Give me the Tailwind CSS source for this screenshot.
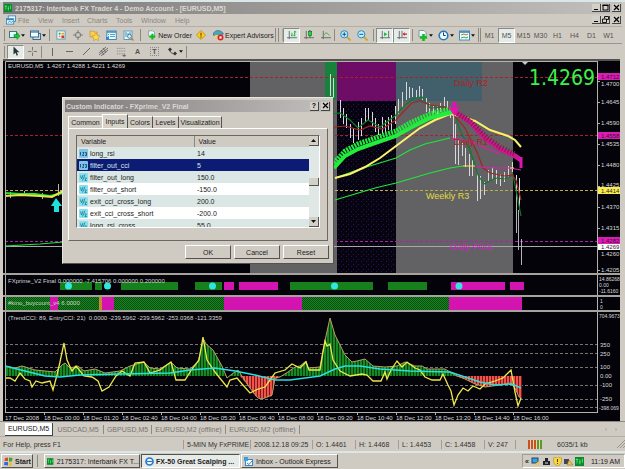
<!DOCTYPE html>
<html lang="en">
<head>
  <meta charset="UTF-8">
  <meta name="viewport" content="width=device-width, initial-scale=1.0">
  <title>Interbank FX Trader 4</title>
  <script src="https://cdn.jsdelivr.net/npm/@tailwindcss/browser@4"></script>
</head>
<body class="bg-[#d0cbc2] min-h-screen font-['Liberation_Sans',Arial,sans-serif] text-[7px] leading-[9px] text-[#222]">

  <!-- Icon set -->
  <svg class="hidden">
    <defs>
      <symbol id="caret" viewBox="0 0 5 3"><path d="M0 0h5L2.500 3z" fill="#111"/></symbol>
      <symbol id="newchart" viewBox="0 0 11 11"><rect x=".5" y="1.500" width="7" height="6" fill="#dff" stroke="#477"/><path d="M5 4.500h3v-2l3 3.500-3 3.500v-2H5z" fill="#1c2" stroke="#174" stroke-width=".5"/></symbol>
      <symbol id="profiles" viewBox="0 0 11 11"><rect x="3" y="3.500" width="7.500" height="6" fill="#cde" stroke="#468"/><rect x=".5" y="1" width="8" height="6" fill="#eff" stroke="#468"/><path d="M1 2h7" stroke="#49c" stroke-width="1.500"/></symbol>
      <symbol id="market" viewBox="0 0 11 11"><rect x="1" y="1" width="9" height="9" fill="#eff" stroke="#59b"/><path d="M3 3h2v2H3z" fill="#2a3"/><path d="M6 3h3v2H6zM3 6h2v2H3z" fill="#e93"/><path d="M6 6h3v3H6z" fill="#c33"/></symbol>
      <symbol id="target" viewBox="0 0 11 11"><circle cx="5.500" cy="5.500" r="3" fill="none" stroke="#777"/><path d="M5.500 0v4M5.500 7v4M0 5.500h4M7 5.500h4" stroke="#777"/></symbol>
      <symbol id="folder" viewBox="0 0 11 11"><path d="M1 1h3l1 1h3v5H1z" fill="#fc5" stroke="#b82" stroke-width=".6"/><path d="M7 3l1.200 2.500 2.800.3-2 2 .5 2.800L7 9.300 4.500 10.600 5 7.800l-2-2 2.800-.3z" fill="#fd4" stroke="#b82" stroke-width=".5"/></symbol>
      <symbol id="terminal" viewBox="0 0 11 11"><rect x=".8" y="1" width="9.500" height="8.500" fill="#dff" stroke="#48b"/><path d="M1 2h9" stroke="#48b" stroke-width="1.500"/><path d="M2 4.500h1M4 4.500h5M2 6.500h1M4 6.500h5" stroke="#69b"/><path d="M0 7h3v3H0z" fill="#38c"/></symbol>
      <symbol id="tester" viewBox="0 0 11 11"><rect x="1" y="1" width="8" height="8.500" fill="#dff" stroke="#69b"/><path d="M3 2v5M5 3v2M7 2v3" stroke="#48a"/><circle cx="6.500" cy="6.300" r="2" fill="#cef" stroke="#468" stroke-width=".8"/><path d="M8 8l2.500 2.500" stroke="#b83" stroke-width="1.500"/></symbol>
      <symbol id="order" viewBox="0 0 11 11"><path d="M2 .5h5l2 2V7H2z" fill="#eff" stroke="#688" stroke-width=".8"/><path d="M6.500 4v7M3 7.500h7" stroke="#1b2" stroke-width="2.600"/></symbol>
      <symbol id="diamond" viewBox="0 0 11 11"><path d="M5.500.5l5 5-5 5-5-5z" fill="#fc2" stroke="#a80" stroke-width=".8"/><path d="M5.500 3v3.200M5.500 7.200v1.200" stroke="#740" stroke-width="1.300"/></symbol>
      <symbol id="expert" viewBox="0 0 11 11"><path d="M0 5c0-3 3-4.500 5-4.500S10 2 10.500 4L5 6z" fill="#4ab" stroke="#258" stroke-width=".5"/><path d="M2 5h6v2c0 3-5 3-6 0z" fill="#fc5"/><circle cx="7.500" cy="7.500" r="3" fill="#d22"/><path d="M6.400 6.400h2.200v2.200H6.400z" fill="#fff"/></symbol>
      <symbol id="bars" viewBox="0 0 11 11"><path d="M2.500 1v9M0 8.500h11" stroke="#666"/><path d="M5.500 3v4M4.500 6h1M8.500 1v6M8.500 2H10M7 6h1.500" stroke="#1a3"/></symbol>
      <symbol id="candles" viewBox="0 0 11 11"><path d="M2.500 1v9M0 8.500h11" stroke="#666"/><path d="M6.500 0v8" stroke="#151"/><rect x="5" y="1.500" width="3.500" height="4.500" fill="#1d3" stroke="#162" stroke-width=".6"/></symbol>
      <symbol id="line" viewBox="0 0 11 11"><path d="M2.500 1v9M0 8.500h11" stroke="#666"/><path d="M3 6c2-4 4-3 6 0" fill="none" stroke="#2a4"/></symbol>
      <symbol id="zoomin" viewBox="0 0 11 11"><path d="M6.500 6.500l4 4" stroke="#ca3" stroke-width="2"/><circle cx="4.300" cy="4.300" r="3.600" fill="#bef" stroke="#38b"/><path d="M2.300 4.300h4M4.300 2.300v4" stroke="#258"/></symbol>
      <symbol id="zoomout" viewBox="0 0 11 11"><path d="M6.500 6.500l4 4" stroke="#ca3" stroke-width="2"/><circle cx="4.300" cy="4.300" r="3.600" fill="#bef" stroke="#38b"/><path d="M2.300 4.300h4" stroke="#258"/></symbol>
      <symbol id="scroll" viewBox="0 0 11 11"><path d="M2.500 1v9M0 8.500h11M9.500 1v7" stroke="#666"/><path d="M4.500 2.500v4.500l3.500-2.200z" fill="#1b3"/></symbol>
      <symbol id="shift" viewBox="0 0 11 11"><path d="M2.500 1v9M0 8.500h11M5.500 1v7" stroke="#666"/><path d="M6 4.500l2.500-2v1.300H11v1.400H8.500v1.300z" fill="#d22"/></symbol>
      <symbol id="clock" viewBox="0 0 11 11"><circle cx="5.500" cy="5.500" r="4.300" fill="#eff" stroke="#27b" stroke-width="1.600"/><path d="M5.500 2.500v3h2.200" fill="none" stroke="#236"/></symbol>
      <symbol id="template" viewBox="0 0 11 11"><rect x=".5" y="1" width="10" height="9" fill="#eff" stroke="#48b"/><path d="M1 2h9" stroke="#38b" stroke-width="1.600"/><path d="M2 5l3-1 2 1 2-1" fill="none" stroke="#c63"/><path d="M2 8l3-1 2 1 2-1" fill="none" stroke="#2a4"/></symbol>
      <symbol id="cursor" viewBox="0 0 11 11"><path d="M3.500.5v8l2-1.800 1.200 3 1.300-.6L6.800 6.200h2.600z" fill="#333"/></symbol>
      <symbol id="cross" viewBox="0 0 11 11"><path d="M5.500 1v3.500M5.500 6.500V10M1 5.500h3.500M6.500 5.500H10" stroke="#777"/></symbol>
      <symbol id="channel" viewBox="0 0 11 11"><path d="M1 7l7-6M3 10l7-6M1 9l9-7M3 4l3 5M5 2l3 5" stroke="#666" stroke-width=".9"/></symbol>
      <symbol id="fibo" viewBox="0 0 11 11"><path d="M1 1.500h9M1 4.500h9M1 7.500h9" stroke="#777" stroke-dasharray="1 1"/><path d="M7 9.500h4M9 8v3" stroke="#666"/></symbol>
      <symbol id="arrows" viewBox="0 0 11 11"><path d="M1 3.500l2-2 2 2-2 2zM6 7.500l2-2 2 2-2 2z" fill="#333"/><path d="M3 4c0 3 2 3 4 4" fill="none" stroke="#444"/></symbol>
      <symbol id="chartwin" viewBox="0 0 11 11"><rect x="2.500" y="1" width="8" height="6" fill="#eff" stroke="#48b"/><rect x=".5" y="4" width="8" height="6" fill="#eff" stroke="#48b"/><path d="M1 5h7" stroke="#38b" stroke-width="1.500"/><path d="M2 8.500l2-1.500 2 1 2-1" stroke="#48a" fill="none"/></symbol>
      <symbol id="app" viewBox="0 0 11 11"><rect width="11" height="11" fill="#0a8a2c"/><path d="M1 3h3M2.500 2v6M5 6h2M6 3v6M9 2v5" stroke="#6f8" stroke-width=".9"/></symbol>
      <symbol id="min" viewBox="0 0 7 7"><path d="M1 5.500h4" stroke="#000"/></symbol>
      <symbol id="max" viewBox="0 0 7 7"><rect x="1" y="1" width="5" height="5" fill="none" stroke="#000"/><path d="M.5 1.500h6" stroke="#000"/></symbol>
      <symbol id="restore" viewBox="0 0 7 7"><path d="M2.500 2.500v-2h4v3h-2M.5 3h4v3.500h-4z" fill="none" stroke="#000" stroke-width=".9"/></symbol>
      <symbol id="close" viewBox="0 0 7 7"><path d="M1 1l5 5M6 1L1 6" stroke="#000" stroke-width="1.200"/></symbol>
      <symbol id="varnum" viewBox="0 0 9 9"><rect width="9" height="9" rx="1" fill="#7fc4e6"/><path d="M1.500 3v3.500M3.500 3.500h1.500L3.500 6.500H5M6 3.500h1.500v3H6M6.500 5h1" fill="none" stroke="#14507c" stroke-width=".9"/></symbol>
      <symbol id="varfrac" viewBox="0 0 9 9"><rect width="9" height="9" rx="1" fill="#86e0ee"/><path d="M1.500 2.500l1 3.500 1.500-4M3.500 7.500L6 1.500M5.500 5h2L5.800 7.500h2" fill="none" stroke="#167a98" stroke-width=".8"/></symbol>
    </defs>
  </svg>

  <div class="relative flex flex-col border-t-2 border-[#dbe7e6]">

    <!-- Title bar -->
    <header class="flex items-center h-3 mx-[3px] px-px bg-linear-to-r from-[#7c7a7a] to-[#c2c0be]">
      <svg class="w-2 h-2 mr-[3px]"><use href="#app"/></svg>
      <h1 class="flex-1 font-bold text-[#dcd8d0] whitespace-nowrap">2175317: Interbank FX Trader 4 - Demo Account - [EURUSD,M5]</h1>
      <button aria-label="Minimize" class="flex items-center justify-center w-[9px] h-2 bg-[#d4d0c8] border-r border-b border-[#444]"><svg class="w-[7px] h-[7px]"><use href="#min"/></svg></button>
      <button aria-label="Maximize" class="flex items-center justify-center w-[9px] h-2 bg-[#d4d0c8] border-r border-b border-[#444]"><svg class="w-[7px] h-[7px]"><use href="#max"/></svg></button>
      <button aria-label="Close" class="ml-0.5 flex items-center justify-center w-[9px] h-2 bg-[#d4d0c8] border-r border-b border-[#444]"><svg class="w-[7px] h-[7px]"><use href="#close"/></svg></button>
    </header>

    <!-- Menu -->
    <nav class="flex items-center h-3 mx-[3px] px-px text-[#8a8781]">
      <svg class="w-[10px] h-[10px] mx-0.5"><use href="#chartwin"/></svg>
      <a href="#" class="w-5">File</a>
      <a href="#" class="w-6">View</a>
      <a href="#" class="w-[25px]">Insert</a>
      <a href="#" class="w-[29px]">Charts</a>
      <a href="#" class="w-[25px]">Tools</a>
      <a href="#" class="w-[34px]">Window</a>
      <a href="#" class="flex-1">Help</a>
      <button aria-label="Minimize chart" class="flex items-center justify-center w-[9px] h-2 bg-[#d4d0c8] border-r border-b border-[#444]"><svg class="w-[7px] h-[7px]"><use href="#min"/></svg></button>
      <button aria-label="Restore chart" class="flex items-center justify-center w-[9px] h-2 bg-[#d4d0c8] border-r border-b border-[#444]"><svg class="w-[7px] h-[7px]"><use href="#restore"/></svg></button>
      <button aria-label="Close chart" class="ml-0.5 flex items-center justify-center w-[9px] h-2 bg-[#d4d0c8] border-r border-b border-[#444]"><svg class="w-[7px] h-[7px]"><use href="#close"/></svg></button>
    </nav>

    <!-- Standard toolbar -->
    <div class="flex items-center h-[17px] mx-[3px] border-t border-[#b3afa8] whitespace-nowrap">
      <span class="w-0.5 h-3 ml-px mr-px border-l border-[#8c8882]"></span>
      <button aria-label="New chart" class="flex items-center gap-px w-[21px] pl-0.5"><svg class="w-[11px] h-[11px]"><use href="#newchart"/></svg><svg class="w-1 h-[3px]"><use href="#caret"/></svg></button>
      <button aria-label="Profiles" class="flex items-center gap-px w-[21px] pl-0.5"><svg class="w-[11px] h-[11px]"><use href="#profiles"/></svg><svg class="w-1 h-[3px]"><use href="#caret"/></svg></button>
      <span class="w-[3px] h-3 border-l border-[#8c8882]"></span>
      <button aria-label="Market watch" class="flex justify-center w-[17px]"><svg class="w-[10px] h-[10px]"><use href="#market"/></svg></button>
      <button aria-label="Data window" class="flex justify-center w-[17px]"><svg class="w-[10px] h-[10px]"><use href="#target"/></svg></button>
      <button aria-label="Navigator" class="flex justify-center w-[17px]"><svg class="w-[11px] h-[11px]"><use href="#folder"/></svg></button>
      <button aria-label="Terminal" class="flex justify-center w-[17px]"><svg class="w-[11px] h-[11px]"><use href="#terminal"/></svg></button>
      <button aria-label="Strategy tester" class="flex justify-center w-[17px]"><svg class="w-[11px] h-[11px]"><use href="#tester"/></svg></button>
      <span class="w-1 h-3 ml-[3px] border-l border-[#8c8882]"></span>
      <button class="flex items-center w-12 pl-[3px] gap-0.5"><svg class="w-[10px] h-[10px]"><use href="#order"/></svg>New Order</button>
      <button aria-label="MetaEditor" class="flex justify-center w-[17px]"><svg class="w-[10px] h-[10px]"><use href="#diamond"/></svg></button>
      <button class="flex items-center w-[66px] pl-1 gap-px"><svg class="w-[11px] h-[11px] shrink-0"><use href="#expert"/></svg>Expert Advisors</button>
      <span class="w-1 h-[14px] border-x border-[#8c8882]"></span>
      <span class="w-1 h-3 border-r border-[#aaa6a0]"></span>
      <button aria-label="Bar chart" class="flex items-center justify-center w-[17px] h-[15px] bg-[#e3ece9] border border-t-[#8c8882] border-l-[#8c8882] border-white"><svg class="w-[10px] h-[10px]"><use href="#bars"/></svg></button>
      <button aria-label="Candlesticks" class="flex justify-center w-[17px]"><svg class="w-[10px] h-[10px]"><use href="#candles"/></svg></button>
      <button aria-label="Line chart" class="flex justify-center w-[17px]"><svg class="w-[10px] h-[10px]"><use href="#line"/></svg></button>
      <span class="w-[3px] h-3 border-l border-[#8c8882]"></span>
      <button aria-label="Zoom in" class="flex justify-center w-[17px]"><svg class="w-[11px] h-[11px]"><use href="#zoomin"/></svg></button>
      <button aria-label="Zoom out" class="flex justify-center w-[17px]"><svg class="w-[11px] h-[11px]"><use href="#zoomout"/></svg></button>
      <span class="w-[3px] h-3 ml-0.5 border-l border-[#8c8882]"></span>
      <button aria-label="Auto scroll" class="flex items-center justify-center w-[17px] h-[15px] bg-[#e3ece9] border border-t-[#8c8882] border-l-[#8c8882] border-white"><svg class="w-[10px] h-[10px]"><use href="#scroll"/></svg></button>
      <button aria-label="Chart shift" class="flex items-center justify-center w-[17px] h-[15px] bg-[#e3ece9] border border-t-[#8c8882] border-l-[#8c8882] border-white"><svg class="w-[10px] h-[10px]"><use href="#shift"/></svg></button>
      <span class="w-[3px] h-3 ml-0.5 border-l border-[#8c8882]"></span>
      <button aria-label="Indicators" class="flex items-center gap-px w-[21px] pl-0.5"><svg class="w-[11px] h-[11px]"><use href="#order"/></svg><svg class="w-1 h-[3px]"><use href="#caret"/></svg></button>
      <button aria-label="Periods" class="flex items-center gap-px w-[21px] pl-0.5"><svg class="w-[11px] h-[11px]"><use href="#clock"/></svg><svg class="w-1 h-[3px]"><use href="#caret"/></svg></button>
      <button aria-label="Templates" class="flex items-center gap-px w-[21px] pl-0.5"><svg class="w-[11px] h-[11px]"><use href="#template"/></svg><svg class="w-1 h-[3px]"><use href="#caret"/></svg></button>
      <span class="w-[3px] h-[14px] border-x border-[#8c8882]"></span>
      <div class="flex text-[#55524e]">
        <button class="w-[17px]">M1</button>
        <button class="w-[17px] h-[15px] bg-[#e3ece9] border border-t-[#8c8882] border-l-[#8c8882] border-white">M5</button>
        <button class="w-[17px]">M15</button>
        <button class="w-[17px]">M30</button>
        <button class="w-[17px]">H1</button>
        <button class="w-[17px]">H4</button>
        <button class="w-[17px]">D1</button>
        <button class="w-[17px]">W1</button>
      </div>
    </div>

    <!-- Drawing tools -->
    <div class="flex items-center h-4 mx-[3px] border-t border-[#99958f] text-[#55524e]">
      <span class="w-0.5 h-3 ml-px mr-px border-l border-[#8c8882]"></span>
      <button aria-label="Cursor" class="flex items-center justify-center w-[17px] h-[14px] bg-[#e3ece9] border border-t-[#8c8882] border-l-[#8c8882] border-white"><svg class="w-[11px] h-[11px]"><use href="#cursor"/></svg></button>
      <button aria-label="Crosshair" class="flex justify-center w-[17px]"><svg class="w-[11px] h-[11px]"><use href="#cross"/></svg></button>
      <span class="w-[3px] h-3 border-l border-[#8c8882]"></span>
      <button aria-label="Vertical line" class="flex justify-center w-[17px]"><span class="w-px h-2 bg-[#666]"></span></button>
      <button aria-label="Horizontal line" class="flex justify-center w-[17px]"><span class="w-[7px] h-px bg-[#666]"></span></button>
      <button aria-label="Trendline" class="flex justify-center w-[17px]"><svg class="w-[9px] h-[9px]" viewBox="0 0 9 9"><path d="M1 8l7-7" stroke="#666"/></svg></button>
      <button aria-label="Channel" class="flex justify-center w-[17px]"><svg class="w-[11px] h-[11px]"><use href="#channel"/></svg></button>
      <button aria-label="Fibonacci" class="flex justify-center w-[17px]"><svg class="w-[10px] h-[10px]"><use href="#fibo"/></svg></button>
      <button class="w-[17px] font-bold">A</button>
      <button class="w-[17px] font-bold"><span class="border border-dotted border-[#888] px-px">T</span></button>
      <button aria-label="Arrows" class="flex items-center gap-px w-[23px] pl-1"><svg class="w-[11px] h-[11px]"><use href="#arrows"/></svg><svg class="w-1 h-[3px]"><use href="#caret"/></svg></button>
      <span class="w-[3px] h-3 border-l border-[#8c8882]"></span>
    </div>

    <!-- Charts -->
    <main class="ml-[3px] mr-[5px] border-t-2 border-[#55534f] bg-[#04030a]">
      <svg class="block w-full" viewBox="3 61 617 360" font-family="'Liberation Sans',Arial,sans-serif" font-size="6" fill="none">
        <defs>
          <pattern id="pBar" width="2" height="2" patternUnits="userSpaceOnUse"><rect width="2" height="2" fill="#5c0a8c"/><path d="M0 0h1v1H0zM1 1h1v1H1z" fill="#800e40"/></pattern>
          <pattern id="pDots" width="5" height="5" patternUnits="userSpaceOnUse"><rect width="5" height="5" fill="#06040e"/><path d="M1 1h1v1H1zM3 4h1v1H3z" fill="#2c105c"/></pattern>
          <pattern id="pGreen" width="2" height="2" patternUnits="userSpaceOnUse"><rect width="2" height="2" fill="#17881c"/><path d="M0 0h1v1H0zM1 1h1v1H1z" fill="#0a4a14"/></pattern>
          <pattern id="pUp" width="3" height="4" patternUnits="userSpaceOnUse"><rect width="3" height="4" fill="#0b3a10"/><rect width="2" height="4" fill="#168a22"/></pattern>
          <pattern id="pDown" width="3" height="4" patternUnits="userSpaceOnUse"><rect width="3" height="4" fill="#701c1c"/><rect width="2" height="4" fill="#f4504c"/></pattern>
          <clipPath id="above"><rect x="4" y="312" width="594" height="64"/></clipPath>
          <clipPath id="below"><rect x="4" y="376" width="594" height="36"/></clipPath>
        </defs>

        <!-- session blocks -->
        <rect x="250" y="62" width="87" height="211" fill="#626164"/>
        <rect x="325" y="62" width="12" height="38" fill="#17823c"/>
        <rect x="337" y="62" width="59" height="211" fill="url(#pDots)"/>
        <rect x="337" y="62" width="59" height="39" fill="url(#pBar)"/>
        <rect x="396" y="62" width="117" height="211" fill="#626164"/>
        <rect x="396" y="62" width="86" height="39" fill="#41606c"/>

        <!-- levels -->
        <g stroke-dasharray="3 2">
          <path d="M5 77.500H597M5 135.500H597" stroke="#a8202a"/>
          <path d="M5 190.500H597" stroke="#b8b040"/>
          <path d="M5 241.500H597" stroke="#b020b0"/>
        </g>
        <path d="M5 246.500H597" stroke="#a9a9a9"/>

        <!-- price bars -->
        <path stroke="#d8d8dc" d="M330.500 74V96M333.500 78V99M340.500 100V118M343.500 108V124M346.500 114V128M350.500 124V138M353.500 128V143M358.500 122V140M361.500 118V136M365.500 108V122M368.500 108V120M372.500 112V126M375.500 118V132M378.500 124V135M382.500 117V134M385.500 120V132M388.500 117V130M391.500 115V130M395.500 106V124M398.500 99V114M402.500 92V108M406.500 82V100M409.500 87V98M412.500 88V97M416.500 90V98M419.500 86V97M422.500 89V100M426.500 98V112M429.500 103V114M433.500 106V114M437.500 106V115M440.500 103V112M444.500 97V110M447.500 101V112M450.500 107V118M453.500 116V138M455.500 124V164M458.500 140V165M462.500 143V156M465.500 148V167M469.500 154V176M472.500 160V176M477.500 172V201M480.500 176V199M484.500 182V195M488.500 170V182M492.500 167V180M496.500 170V184M500.500 174V186M504.500 172V182M508.500 166V178M512.500 162V172M516.500 175V190M519.500 178V210"/>
        <path stroke="#b4b4b8" d="M516.500 190V233M518.500 210V250M521.500 239V265M10.500 192V198M24.500 191V196M42.500 193V199M58.500 184V196"/>

        <!-- averages -->
        <g stroke-width="1.200">
          <path d="M325 115L340 113 350 120 358 128 368 120 380 127 395 116 405 105 415 98 422 97 430 108 445 107 455 115 460 130 470 150 478 175 484 184 495 178 505 179 513 175 517 195 521 216" stroke="#117a2c"/>
          <path d="M325 140L335 127 345 126 360 130 370 126 382 129 396 120 404 111 412 103 420 101 430 105 445 107 450 110 465 128 477 152 483 168 490 173 505 176 512 175 516 180 521 200" stroke="#a02824"/>
          <path d="M335 178L360 169 396 158 410 150 425 144 450 138M335 200L375 188 396 183 430 173 450 168 463 166M5 246L40 244 63 242" stroke="#1fe83a"/>
          <path d="M450 138L470 141 485 148 500 154M475 167L500 168 510 168 521 170" stroke="#e01cae"/>
          <path d="M463 166H475M510 168H514" stroke="#f5ee40"/>
        </g>
        <path d="M335 178L350 174 365 167 380 158 400 143 420 128 435 120 450 114 460 116 475 121 490 130 508 136 515 140 521 147" stroke="#fbf36a" stroke-width="2"/>
        <path d="M334 168L345 156 358 149 375 143 396 136 410 128 430 118 452 112" stroke="#22ec3c" stroke-width="4"/>
        <path d="M334 163L345 151 358 144 375 138 396 131 410 123 430 114 452 109" stroke="#22ec3c" stroke-width="5" stroke-dasharray="2 1"/>
        <path d="M455 112L470 122 485 138 500 149 515 156 521 160" stroke="#c81892" stroke-width="5"/>
        <path d="M521 157V168" stroke="#d817b4" stroke-width="3"/>
        <path d="M455 112L470 121 485 136 500 147 515 154" stroke="#8a1838" stroke-width="5" stroke-dasharray="1 2"/>
        <path d="M5 193L20 194 35 194 50 196 63 193" stroke="#1fe83a" stroke-width="2"/>
        <path d="M5 196L20 195 40 196 52 197 63 191" stroke="#e8e04a" stroke-width="2"/>
        <path d="M51 206l5-8 6 8h-3v6h-5v-6z" fill="#1be3dc"/>
        <path d="M452.500 102h4v6l4-2-6 10-7-10 5 2z" fill="#e014b0"/>
        <path d="M522 62h6l-3 3z" fill="#c8c8c8"/>

        <g font-size="9">
          <text x="454" y="86" fill="#b3201e">Daily R2</text>
          <text x="454" y="145" fill="#b3201e">Daily R1</text>
          <text x="426" y="199" fill="#e2dc3c">Weekly R3</text>
          <text x="450" y="250" fill="#d21fc0">Daily Pivot</text>
        </g>
        <text x="529" y="85" font-size="21" font-family="'DejaVu Sans Condensed','DejaVu Sans',sans-serif" fill="#3df04a">1.4269</text>
        <text x="8" y="68" fill="#d8d8d8">EURUSD,M5&#160; 1.4267 1.4288 1.4221 1.4269</text>

        <!-- price axis -->
        <path d="M597.500 62V412M598 81.500h2M598 102.500h2M598 123.500h2M598 144.500h2M598 165.500h2M598 186.500h2M598 207.500h2M598 228.500h2M598 249.500h2M598 270.500h2" stroke="#b5b2ac"/>
        <g fill="#d8d8d8">
          <text x="601" y="86">1.4700</text>
          <text x="601" y="104">1.4645</text>
          <text x="601" y="125">1.4590</text>
          <text x="601" y="146">1.4535</text>
          <text x="601" y="167">1.4480</text>
          <text x="601" y="187">1.4425</text>
          <text x="601" y="209">1.4370</text>
          <text x="601" y="230">1.4315</text>
          <text x="601" y="256">1.4260</text>
          <text x="601" y="272">1.4205</text>
        </g>
        <path d="M598 73h22v7h-22zM598 132h22v7h-22zM598 237h22v7h-22z" fill="#d81cb4"/>
        <path d="M598 187h22v7h-22z" fill="#f6ee50"/>
        <path d="M598 244h22v6h-22z" fill="#fff"/>
        <g fill="#40102c">
          <text x="601" y="79">1.4712</text>
          <text x="601" y="138">1.4558</text>
          <text x="601" y="193">1.4414</text>
          <text x="601" y="243">1.4282</text>
          <text x="601" y="249">1.4269</text>
        </g>

        <!-- FXprime pane -->
        <path d="M60 282h32v8H60zM95 282h7v8h-7zM121 282h57v8h-57zM195 282h27v8h-27zM290 282h83v8h-83zM388 282h39v8h-39z" fill="#16811c"/>
        <path d="M224 282h10v8h-10zM239 282h39v8h-39zM451 282h54v8h-54zM510 282h14v8h-14z" fill="#d414b0"/>
        <g fill="#2fe6e0"><circle cx="68.500" cy="286" r="3.500"/><circle cx="107.500" cy="286" r="3.500"/><circle cx="212.500" cy="286" r="3.500"/><circle cx="334.500" cy="286" r="3.500"/><circle cx="459" cy="286" r="3.500"/></g>
        <text x="8" y="283" fill="#d8d8d8">FXprime_V2 Final 0.000000 -7.415706 0.000000 0.200000</text>
        <g fill="#d8d8d8" font-size="5"><text x="599" y="281">14.86268</text><text x="599" y="287">0.00</text><text x="599" y="293">-11.6160</text></g>

        <!-- buycount pane -->
        <rect x="5" y="297" width="444" height="13" fill="url(#pGreen)"/>
        <path d="M50 297h8v13h-8zM101 297h13v13h-13zM224 297h78v13h-78zM449 297h73v13h-73z" fill="#d414b0"/>
        <path d="M99 297h3v13h-3z" fill="#c88a28"/>
        <text x="8" y="305" fill="#c8d8c0">#kino_buycount_v4 6.0000</text>
        <g fill="#d8d8d8" font-size="5"><text x="600" y="303">1</text><text x="600" y="309">0</text></g>

        <!-- CCI pane -->
        <path d="M5 344.500H597M5 353.500H597M5 367.500H597M5 385.500H597M5 399.500H597M5 407.500H597" stroke="#77756f" stroke-dasharray="3 2"/>
        <path clip-path="url(#above)" fill="url(#pUp)" d="M5 376V366L15 368 22 366 35 370 55 372 62 365 65 363 70 368 78 366 84 371 95 369 105 373 120 371 130 366 144 362 150 368 160 369 171 362 177 368 190 369 198 362 202 345 204 340 206 344 213 350 222 366 227 378 232 374 238 370 242 376 250 388 258 398 262 399 272 395 275 378 280 377 288 372 295 367 300 366 306 361 308 368 320 367 324 345 330 318 335 335 345 355 352 362 357 361 365 359 373 366 385 367 397 366 405 362 415 366 422 366 427 369 445 369 455 375 465 379 475 384 485 387 500 385 510 383 515 388 519 397 521 398V376z"/>
        <path clip-path="url(#below)" fill="url(#pDown)" d="M240 376L250 388 255 396 262 399 272 396 275 380 280 376zM455 376L465 379 475 384 485 387 500 385 510 383 515 388 519 397 522 399V376z"/>
        <path stroke="#b8a060" d="M5 366L15 368 22 366 35 370 55 372 62 365 65 363 70 368 78 366 84 371 95 369 105 373 120 371 130 366 144 362 150 368 160 369 171 362 177 368 190 369 198 362 202 345 204 340 206 344 213 350 222 366 227 378 232 374 238 370 242 376 250 388 258 398 262 399 272 395 275 378 280 377 288 372 295 367 300 366 306 361 308 368 320 367 324 345 330 318 335 335 345 355 352 362 357 361 365 359 373 366 385 367 397 366 405 362 415 366 422 366 427 369 445 369 455 375 465 379 475 384 485 387 500 385 510 383 515 388 519 397 521 398"/>
        <path stroke="#eee84a" stroke-width="1.300" d="M5 378L10 378 15 381 20 373 25 379 30 381 32 387 36 381 42 383 50 381 53 390 57 375 60 362 64 343 67 360 72 371 76 366 84 376 92 377 98 381 102 391 109 387 116 376 122 371 130 376 135 363 144 362 150 373 160 370 171 362 176 380 185 380 192 369 199 360 203 337 207 360 215 372 227 387 230 380 237 378 242 384 250 393 258 389 265 387 270 380 275 373 285 370 292 364 300 368 306 362 309 370 320 370 323 352 325 341 327 346 330 344 333 360 340 371 350 376 362 374 367 375 373 381 381 381 385 372 387 379 391 370 397 361 402 367 407 362 415 368 420 370 425 377 432 380 440 380 443 374 448 385 451 391 454 405 458 395 463 388 468 391 473 386 480 389 485 384 495 381 503 378 511 370 515 392 518 406 521 398"/>
        <path stroke="#2adfe0" stroke-width="1.400" d="M5 366L25 371 45 376 60 377 80 375 120 374 170 373 190 370 215 368 235 371 255 375 275 380 290 380 305 378 320 376 335 369 345 366 360 366 380 369 410 371 450 372 465 377 480 382 495 385 512 384 521 388"/>
        <text x="8" y="320" fill="#d8d8d8">(TrendCCI: 89, EntryCCI: 21)&#160; 0.0000 -239.5962 -239.5962 -253.0368 -121.3359</text>
        <g fill="#d8d8d8">
          <text x="599" y="318" font-size="5">704.9673</text>
          <text x="600" y="347">350</text>
          <text x="600" y="356">250</text>
          <text x="600" y="369">100</text>
          <text x="600" y="378">0.00</text>
          <text x="600" y="387">-100</text>
          <text x="600" y="401">-250</text>
          <text x="599" y="410" font-size="5">-398.069</text>
        </g>

        <!-- frame and pane splitters -->
        <path d="M5.500 412V61.500H598M5 412.500H598" stroke="#b5b2ac"/>
        <path d="M3 274H620M3 296H620M3 311H620" stroke="#a6a39e" stroke-width="2"/>

        <g fill="#d8d8d8">
          <text x="5" y="420">17 Dec 2008</text>
          <text x="44" y="420">18 Dec 00:00</text>
          <text x="83" y="420">18 Dec 01:20</text>
          <text x="122" y="420">18 Dec 02:40</text>
          <text x="161" y="420">18 Dec 04:00</text>
          <text x="200" y="420">18 Dec 05:20</text>
          <text x="239" y="420">18 Dec 06:40</text>
          <text x="278" y="420">18 Dec 08:00</text>
          <text x="317" y="420">18 Dec 09:20</text>
          <text x="357" y="420">18 Dec 10:40</text>
          <text x="396" y="420">18 Dec 12:00</text>
          <text x="435" y="420">18 Dec 13:20</text>
          <text x="474" y="420">18 Dec 14:40</text>
          <text x="513" y="420">18 Dec 16:00</text>
        </g>
        <path d="M44.500 413v2M83.500 413v2M122.500 413v2M161.500 413v2M200.500 413v2M239.500 413v2M278.500 413v2M317.500 413v2M357.500 413v2M396.500 413v2M435.500 413v2M474.500 413v2M513.500 413v2" stroke="#b5b2ac"/>
      </svg>
    </main>

    <!-- Chart tabs -->
    <div class="flex items-center h-[15px] pl-[5px] pr-1 border-t border-[#8c8882] text-[#77746f] whitespace-nowrap">
      <button class="w-12 h-[13px] bg-white text-[#222] border-r border-b border-[#444]">EURUSD,M5</button>
      <button class="w-[51px] border-r border-[#8c8882]">USDCAD,M5</button>
      <button class="w-12 border-r border-[#8c8882]">GBPUSD,M5</button>
      <button class="w-[74px] border-r border-[#8c8882]">EURUSD,M2 (offline)</button>
      <button class="w-[74px] border-r border-[#8c8882]">EURUSD,M2 (offline)</button>
      <span class="flex-1"></span>
      <button aria-label="Previous tab" class="w-[10px] text-[#999]">‹</button>
      <button aria-label="Next tab" class="w-[10px] text-[#999]">›</button>
    </div>

    <!-- Status bar -->
    <div class="flex items-center h-[15px] pl-[3px] border-t border-[#b3afa8] whitespace-nowrap text-[#333]">
      <span class="flex-1">For Help, press F1</span>
      <span class="w-[67px] pl-[3px] border-l border-[#a19d97]">5-MIN My FxPRIME</span>
      <span class="w-[62px] pl-[3px] border-l border-[#a19d97]">2008.12.18 09:25</span>
      <span class="w-[43px] pl-[3px] border-l border-[#a19d97]">O: 1.4461</span>
      <span class="w-[43px] pl-[3px] border-l border-[#a19d97]">H: 1.4468</span>
      <span class="w-[43px] pl-[3px] border-l border-[#a19d97]">L: 1.4453</span>
      <span class="w-[43px] pl-[3px] border-l border-[#a19d97]">C: 1.4458</span>
      <span class="w-[31px] pl-[3px] border-l border-[#a19d97]">V: 247</span>
      <span class="flex items-center w-[110px] pl-3 gap-[15px] border-l border-[#a19d97]">
        <svg class="w-[14px] h-[9px]" viewBox="0 0 14 9"><path d="M0 0h8v9H0z" fill="#c8502c"/><path d="M8 0h6v9H8z" fill="#5a9a2c"/><path d="M2.500 0v9M5.500 0v9M8.500 0v9M11.500 0v9" stroke="#e8d8a0"/></svg>
        <span class="flex-1">6035/1 kb</span>
        <svg class="w-2 h-2" viewBox="0 0 8 8"><path d="M0 8l8-8M3 8l5-5M6 8l2-2" stroke="#99958f"/></svg>
      </span>
    </div>

    <!-- Indicator dialog -->
    <section role="dialog" aria-labelledby="dlgTitle" class="absolute left-[62px] top-[95px] w-[272px] p-0.5 pb-1 bg-[#d0cbc2] border border-[#e8e6e0] border-r-[#55534f] border-b-[#55534f]">
      <div class="flex items-center h-3 px-px gap-0.5 bg-linear-to-r from-[#7c7a7a] to-[#c2c0be]">
        <h2 id="dlgTitle" class="flex-1 font-bold text-[#dcd8d0]">Custom Indicator - FXprime_V2 Final</h2>
        <button aria-label="Help" class="w-[9px] h-[9px] leading-[8px] font-bold text-black bg-[#d4d0c8] border-r border-b border-[#444]">?</button>
        <button aria-label="Close dialog" class="flex items-center justify-center w-[9px] h-[9px] bg-[#d4d0c8] border-r border-b border-[#444]"><svg class="w-[7px] h-[7px]"><use href="#close"/></svg></button>
      </div>
      <div role="tablist" class="flex items-end h-4 px-[3px]">
        <button role="tab" class="w-[34px] h-3 border-t border-l border-white">Common</button>
        <button role="tab" aria-selected="true" class="w-[26px] h-[14px] bg-[#d6d2ca] border-t border-l border-r border-white border-r-[#55534f]">Inputs</button>
        <button role="tab" class="w-[25px] h-3 border-t border-r border-white border-r-[#55534f]">Colors</button>
        <button role="tab" class="w-[26px] h-3 border-t border-r border-white border-r-[#55534f]">Levels</button>
        <button role="tab" class="w-[43px] h-3 border-t border-r border-white border-r-[#55534f]">Visualization</button>
      </div>
      <div class="mx-[3px] px-[7px] pt-1.5 pb-3 border border-white border-r-[#6b6862] border-b-[#6b6862]">
        <div class="flex h-[93px] border border-[#6b6862] border-r-white border-b-white bg-white overflow-hidden">
          <div class="flex-1 h-full overflow-hidden">
            <table class="w-full table-fixed border-collapse text-left">
              <thead>
                <tr class="h-[11px] bg-[#d0cbc2]">
                  <th class="w-[117px] p-0 pl-1 font-normal border-r border-[#8c8882]">Variable</th>
                  <th class="p-0 pl-1 font-normal">Value</th>
                </tr>
              </thead>
              <tbody>
                <tr class="h-3 bg-[#dbe7e5]"><td class="p-0 pl-0.5"><span class="flex items-center gap-0.5"><svg class="w-[9px] h-[9px]"><use href="#varnum"/></svg>long_rsi</span></td><td class="p-0 pl-[3px]">14</td></tr>
                <tr class="h-3 bg-[#0c1c74] text-[#dbe7e5]"><td class="p-0 pl-0.5"><span class="flex items-center gap-0.5"><svg class="w-[9px] h-[9px]"><use href="#varnum"/></svg>filter_out_cci</span></td><td class="p-0 pl-[3px]">5</td></tr>
                <tr class="h-3 bg-[#dbe7e5]"><td class="p-0 pl-0.5"><span class="flex items-center gap-0.5"><svg class="w-[9px] h-[9px]"><use href="#varfrac"/></svg>filter_out_long</span></td><td class="p-0 pl-[3px]">150.0</td></tr>
                <tr class="h-3 bg-white"><td class="p-0 pl-0.5"><span class="flex items-center gap-0.5"><svg class="w-[9px] h-[9px]"><use href="#varfrac"/></svg>filter_out_short</span></td><td class="p-0 pl-[3px]">-150.0</td></tr>
                <tr class="h-3 bg-[#dbe7e5]"><td class="p-0 pl-0.5"><span class="flex items-center gap-0.5"><svg class="w-[9px] h-[9px]"><use href="#varfrac"/></svg>exit_cci_cross_long</span></td><td class="p-0 pl-[3px]">200.0</td></tr>
                <tr class="h-3 bg-white"><td class="p-0 pl-0.5"><span class="flex items-center gap-0.5"><svg class="w-[9px] h-[9px]"><use href="#varfrac"/></svg>exit_cci_cross_short</span></td><td class="p-0 pl-[3px]">-200.0</td></tr>
                <tr class="h-3 bg-[#dbe7e5]"><td class="p-0 pl-0.5"><span class="flex items-center gap-0.5"><svg class="w-[9px] h-[9px]"><use href="#varfrac"/></svg>long_rsi_cross</span></td><td class="p-0 pl-[3px]">55.0</td></tr>
              </tbody>
            </table>
          </div>
          <div class="flex flex-col w-[10px] bg-[#e0e8e5]">
            <button aria-label="Scroll up" class="flex items-center justify-center h-[10px] bg-[#d4d0c8] border-r border-b border-[#55534f]"><svg class="w-[5px] h-[3px] rotate-180"><use href="#caret"/></svg></button>
            <span class="flex-1"></span>
            <span class="h-2 bg-[#d4d0c8] border-r border-b border-[#55534f]"></span>
            <span class="flex-1"></span>
            <button aria-label="Scroll down" class="flex items-center justify-center h-[10px] bg-[#d4d0c8] border-r border-b border-[#55534f]"><svg class="w-[5px] h-[3px]"><use href="#caret"/></svg></button>
          </div>
        </div>
      </div>
      <div class="flex justify-end gap-[3px] mt-1 mr-0.5">
        <button class="w-[46px] h-[14px] border border-white border-r-[#55534f] border-b-[#55534f]">OK</button>
        <button class="w-[46px] h-[14px] border border-white border-r-[#55534f] border-b-[#55534f]">Cancel</button>
        <button class="w-[46px] h-[14px] border border-white border-r-[#55534f] border-b-[#55534f]">Reset</button>
      </div>
    </section>
  </div>

  <!-- Taskbar -->
  <footer class="flex items-center h-[18px] pl-px border-t-2 border-[#dbe7e6] whitespace-nowrap">
    <button class="flex items-center gap-0.5 w-8 h-[14px] pl-0.5 font-bold border border-white border-r-[#55534f] border-b-[#55534f]">
      <svg class="w-[9px] h-[9px]" viewBox="0 0 9 9"><path d="M1 1l3-.5v3.500H.5z" fill="#e0482c"/><path d="M5 .5l3.500.5L8 4.500H5z" fill="#3fa63c"/><path d="M.5 5H4v3.500L0 8z" fill="#2d6fd0"/><path d="M5 5.500h3L7.500 9 5 8.500z" fill="#f0c020"/></svg>Start
    </button>
    <span class="w-0.5 h-3 mx-1 border-l border-[#8c8882]"></span>
    <button class="flex items-center gap-[3px] w-[96px] h-[14px] ml-px pl-0.5 border border-white border-r-[#55534f] border-b-[#55534f]"><svg class="w-[9px] h-[9px]"><use href="#app"/></svg>2175317: Interbank FX T...</button>
    <button class="flex items-center gap-0.5 w-[99px] h-[14px] ml-px pl-[3px] font-bold bg-[#e6ebe8] border border-[#55534f] border-r-white border-b-white"><svg class="w-[9px] h-[9px] shrink-0" viewBox="0 0 9 9"><circle cx="4.500" cy="4.500" r="3.500" fill="#fff" stroke="#2478d0" stroke-width="1.700"/><path d="M2 4.500h5" stroke="#2478d0" stroke-width="1.300"/></svg>FX-50 Great Scalping ...</button>
    <button class="flex items-center gap-[3px] w-[97px] h-[14px] ml-px pl-0.5 border border-white border-r-[#55534f] border-b-[#55534f]"><svg class="w-[9px] h-[9px]" viewBox="0 0 9 9"><rect x="1.500" y="2.500" width="7" height="6" fill="#eff" stroke="#3a86c8"/><path d="M0 0h4v4H0z" fill="#3aa0e0"/><path d="M3 6l2 1.500L8 4" fill="none" stroke="#3a86c8"/></svg>Inbox - Outlook Express</button>
    <span class="flex-1"></span>
    <div class="flex items-center gap-0.5 h-[14px] pl-0.5 pr-1 border border-[#a19d97] border-r-white border-b-white">
      <span class="font-bold">«</span>
      <svg class="w-[9px] h-[9px]" viewBox="0 0 9 9"><rect x="1" y="1" width="6" height="5" fill="#38a0e0" stroke="#246"/><path d="M3 8l5-4v4z" fill="#f0c83c"/></svg>
      <svg class="w-[9px] h-[9px]" viewBox="0 0 9 9"><path d="M1 8h7V4H6V1H3v3H1z" fill="#222"/><path d="M3 6h3" stroke="#ddd"/></svg>
      <svg class="w-[9px] h-[9px]" viewBox="0 0 9 9"><path d="M4.500 0l4 1v3c0 3-2 4-4 5-2-1-4-2-4-5V1z" fill="#f8d838" stroke="#a88010" stroke-width=".5"/><path d="M4.500 2v3M4.500 6v1" stroke="#633"/></svg>
      <svg class="w-[9px] h-[9px]" viewBox="0 0 9 9"><path d="M0 2h5v5H0z" fill="#445"/><path d="M5 3l4 5H3z" fill="#f0c83c" stroke="#862" stroke-width=".5"/></svg>
      <svg class="w-[9px] h-[9px]"><use href="#app"/></svg>
      <span class="pl-[5px]">11:19 AM</span>
    </div>
  </footer>
</body>
</html>
